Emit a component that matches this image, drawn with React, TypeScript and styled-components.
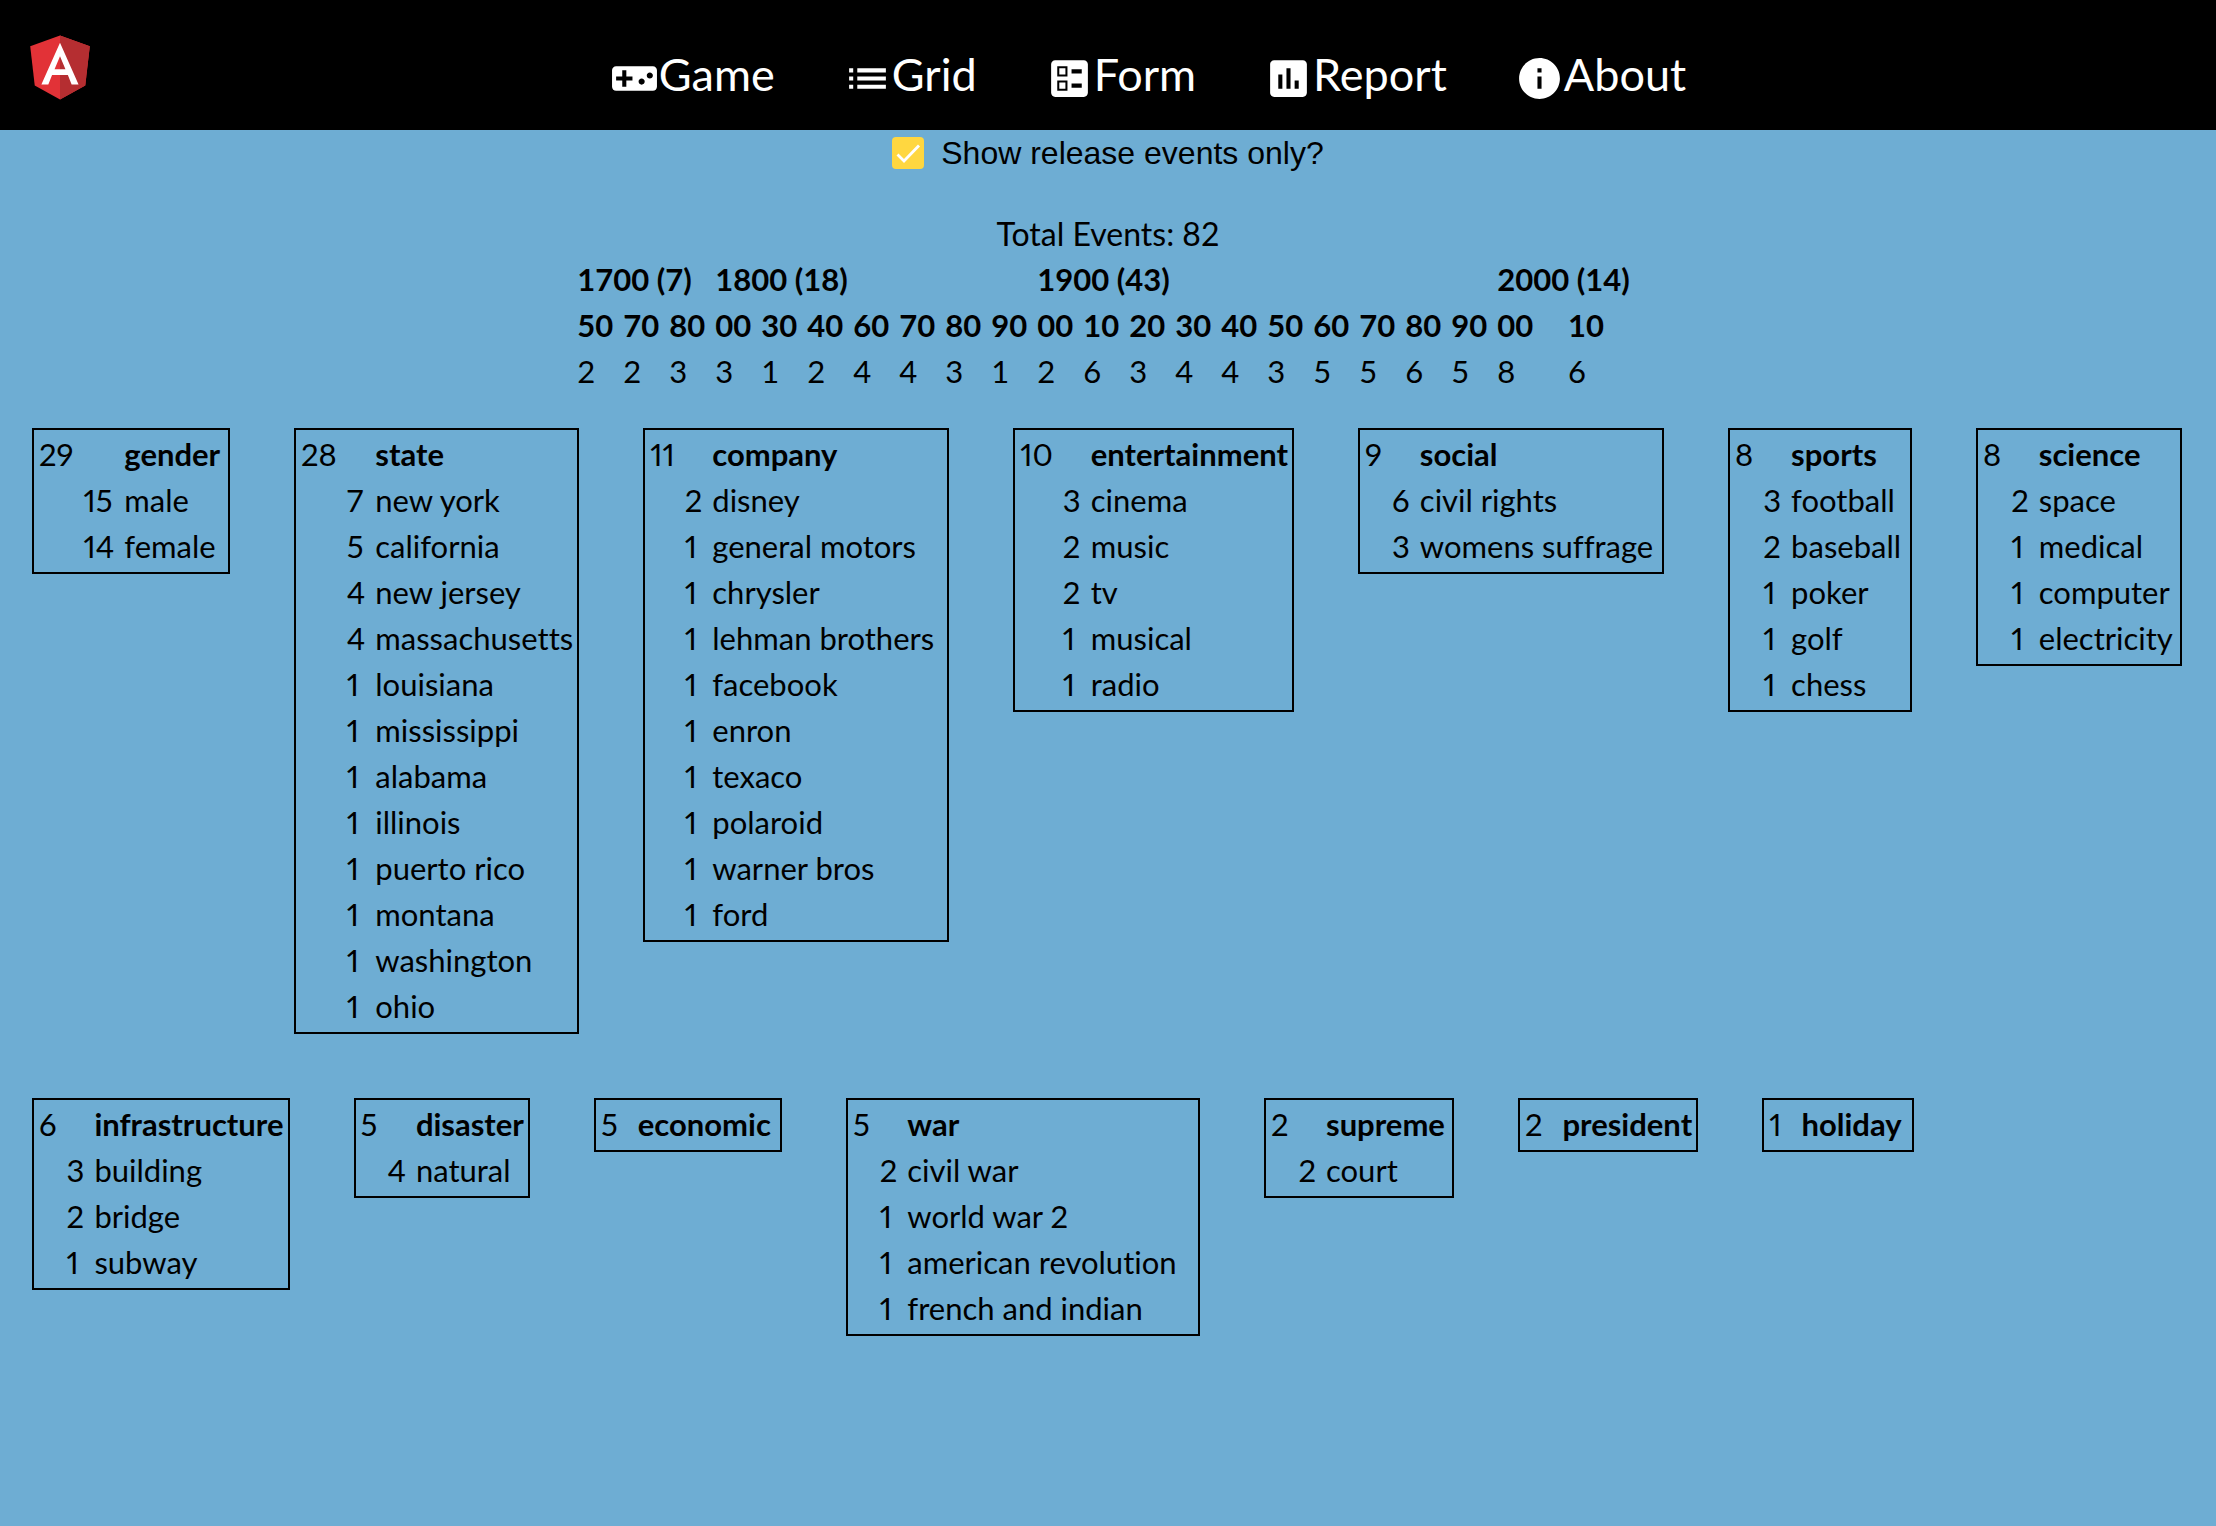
import React, { useState } from "react";
import styled, { createGlobalStyle } from "styled-components";
import { MdVideogameAsset, MdList, MdBallot, MdAssessment, MdInfo } from "react-icons/md";

const GlobalStyle = createGlobalStyle`
  *, *::before, *::after { box-sizing: border-box; }
  body {
    margin: 0;
    background: #6eadd3;
    color: #000;
    font-family: Lato, "Open Sans", sans-serif;
    font-size: 31px;
    font-variant-ligatures: none;
    line-height: 46px;
  }
`;

const Header = styled.header`
  display: flex;
  align-items: center;
  height: 130px;
  padding: 2px 20px 0;
  background: #000;
`;

const HomeLink = styled.a`
  display: flex;
  svg { width: 80px; height: 80px; }
`;

const Nav = styled.nav`
  display: flex;
  flex: 1;
  justify-content: center;
  gap: 68px;
  padding-top: 24px;
`;

const NavLink = styled.a`
  display: flex;
  align-items: center;
  color: #fff;
  font-size: 45px;
  line-height: 44px;
  text-decoration: none;
  svg { width: 49px; height: 49px; }
`;

const NavText = styled.span`
  padding-bottom: 8px;
`;

const Filter = styled.label`
  display: flex;
  justify-content: center;
  align-items: center;
  gap: 17px;
  height: 46px;
  font-family: "Liberation Sans", Arial, sans-serif;
  font-size: 32px;
`;

const CheckWrap = styled.span`
  display: grid;
  > * { grid-area: 1 / 1; width: 32px; height: 32px; }
  svg { pointer-events: none; }
`;

const CheckInput = styled.input`
  appearance: none;
  margin: 0;
  border-radius: 4px;
  border: 4px solid #333;
  &:checked { border: 0; background: #ffd740; }
`;

const Total = styled.p`
  margin: 36px 0 0;
  font-size: 32px;
  line-height: 44px;
  text-align: center;
`;

const Timeline = styled.table`
  margin: 0 auto;
  border-collapse: collapse;
  th, td { min-width: 46px; padding: 0 9px 0 0; text-align: left; white-space: nowrap; }
  th { font-weight: 700; }
`;

const Cards = styled.main`
  display: flex;
  flex-wrap: wrap;
  align-items: flex-start;
  gap: 64px;
  padding: 34px 32px;
`;

const Card = styled.table<{ $width: number }>`
  width: ${(p) => p.$width}px;
  border: 2px solid #000;
  border-collapse: separate;
  border-spacing: 0;
  padding: 1px 0 3px;
  font-variant-numeric: proportional-nums;
  th, td { padding: 0 5px; text-align: left; white-space: nowrap; }
  th { font-weight: 700; }
  th, td:last-child { width: 100%; padding-right: 4px; }
`;

type Item = [number, string];
interface Group { count: number; name: string; width: number; items: Item[]; }

const groups: Group[] = [
  { count: 29, name: "gender", width: 198, items: [[15, "male"], [14, "female"]] },
  { count: 28, name: "state", width: 280, items: [[7, "new york"], [5, "california"], [4, "new jersey"], [4, "massachusetts"], [1, "louisiana"], [1, "mississippi"], [1, "alabama"], [1, "illinois"], [1, "puerto rico"], [1, "montana"], [1, "washington"], [1, "ohio"]] },
  { count: 11, name: "company", width: 306, items: [[2, "disney"], [1, "general motors"], [1, "chrysler"], [1, "lehman brothers"], [1, "facebook"], [1, "enron"], [1, "texaco"], [1, "polaroid"], [1, "warner bros"], [1, "ford"]] },
  { count: 10, name: "entertainment", width: 280, items: [[3, "cinema"], [2, "music"], [2, "tv"], [1, "musical"], [1, "radio"]] },
  { count: 9, name: "social", width: 306, items: [[6, "civil rights"], [3, "womens suffrage"]] },
  { count: 8, name: "sports", width: 184, items: [[3, "football"], [2, "baseball"], [1, "poker"], [1, "golf"], [1, "chess"]] },
  { count: 8, name: "science", width: 206, items: [[2, "space"], [1, "medical"], [1, "computer"], [1, "electricity"]] },
  { count: 6, name: "infrastructure", width: 256, items: [[3, "building"], [2, "bridge"], [1, "subway"]] },
  { count: 5, name: "disaster", width: 176, items: [[4, "natural"]] },
  { count: 5, name: "economic", width: 188, items: [] },
  { count: 5, name: "war", width: 354, items: [[2, "civil war"], [1, "world war 2"], [1, "american revolution"], [1, "french and indian"]] },
  { count: 2, name: "supreme", width: 190, items: [[2, "court"]] },
  { count: 2, name: "president", width: 180, items: [] },
  { count: 1, name: "holiday", width: 152, items: [] },
];

const centuries: { label: string; decades: [string, number][] }[] = [
  { label: "1700 (7)", decades: [["50", 2], ["70", 2], ["80", 3]] },
  { label: "1800 (18)", decades: [["00", 3], ["30", 1], ["40", 2], ["60", 4], ["70", 4], ["80", 3], ["90", 1]] },
  { label: "1900 (43)", decades: [["00", 2], ["10", 6], ["20", 3], ["30", 4], ["40", 4], ["50", 3], ["60", 5], ["70", 5], ["80", 6], ["90", 5]] },
  { label: "2000 (14)", decades: [["00", 8], ["10", 6]] },
];

const links = [
  { label: "Game", Icon: MdVideogameAsset },
  { label: "Grid", Icon: MdList },
  { label: "Form", Icon: MdBallot },
  { label: "Report", Icon: MdAssessment },
  { label: "About", Icon: MdInfo },
];

const Logo = () => (
  <svg viewBox="0 0 250 250" aria-hidden="true">
    <path fill="#e23237" d="M125 30 31.9 63.2l14.2 123.1L125 230l78.9-43.7 14.2-123.1z" />
    <path fill="#b52e31" d="M125 30v200l78.9-43.7 14.2-123.1z" />
    <path fill="#fff" d="M125 52.1 66.8 182.6h21.7l11.7-29.2h49.4l11.7 29.2H183zm17 83.3h-34l17-40.9z" />
  </svg>
);

export default function App() {
  const [releaseOnly, setReleaseOnly] = useState(true);
  const decades = centuries.flatMap((c) => c.decades);

  return (
    <>
      <GlobalStyle />
      <Header>
        <HomeLink href="#" aria-label="Home"><Logo /></HomeLink>
        <Nav>
          {links.map(({ label, Icon }) => (
            <NavLink key={label} href={`#${label.toLowerCase()}`}>
              <Icon />
              <NavText>{label}</NavText>
            </NavLink>
          ))}
        </Nav>
      </Header>
      <Filter htmlFor="release-only">
        <CheckWrap>
          <CheckInput id="release-only" type="checkbox" checked={releaseOnly} onChange={(e) => setReleaseOnly(e.target.checked)} />
          {releaseOnly && (
            <svg viewBox="0 0 32 32" aria-hidden="true">
              <path d="M5.5 17.5 12 24 27 8.5" fill="none" stroke="#fff" strokeWidth="2.8" />
            </svg>
          )}
        </CheckWrap>
        Show release events only?
      </Filter>
      <Total>Total Events: 82</Total>
      <Timeline>
        <thead>
          <tr>{centuries.map((c) => <th key={c.label} colSpan={c.decades.length}>{c.label}</th>)}</tr>
          <tr>{decades.map(([d], i) => <th key={i}>{d}</th>)}</tr>
        </thead>
        <tbody>
          <tr>{decades.map(([, n], i) => <td key={i}>{n}</td>)}</tr>
        </tbody>
      </Timeline>
      <Cards>
        {groups.map((g) => (
          <Card key={g.name} $width={g.width}>
            <thead>
              <tr><td>{g.count}</td><td /><th>{g.name}</th></tr>
            </thead>
            <tbody>
              {g.items.map(([n, name]) => (
                <tr key={name}><td /><td>{n}</td><td>{name}</td></tr>
              ))}
            </tbody>
          </Card>
        ))}
      </Cards>
    </>
  );
}
